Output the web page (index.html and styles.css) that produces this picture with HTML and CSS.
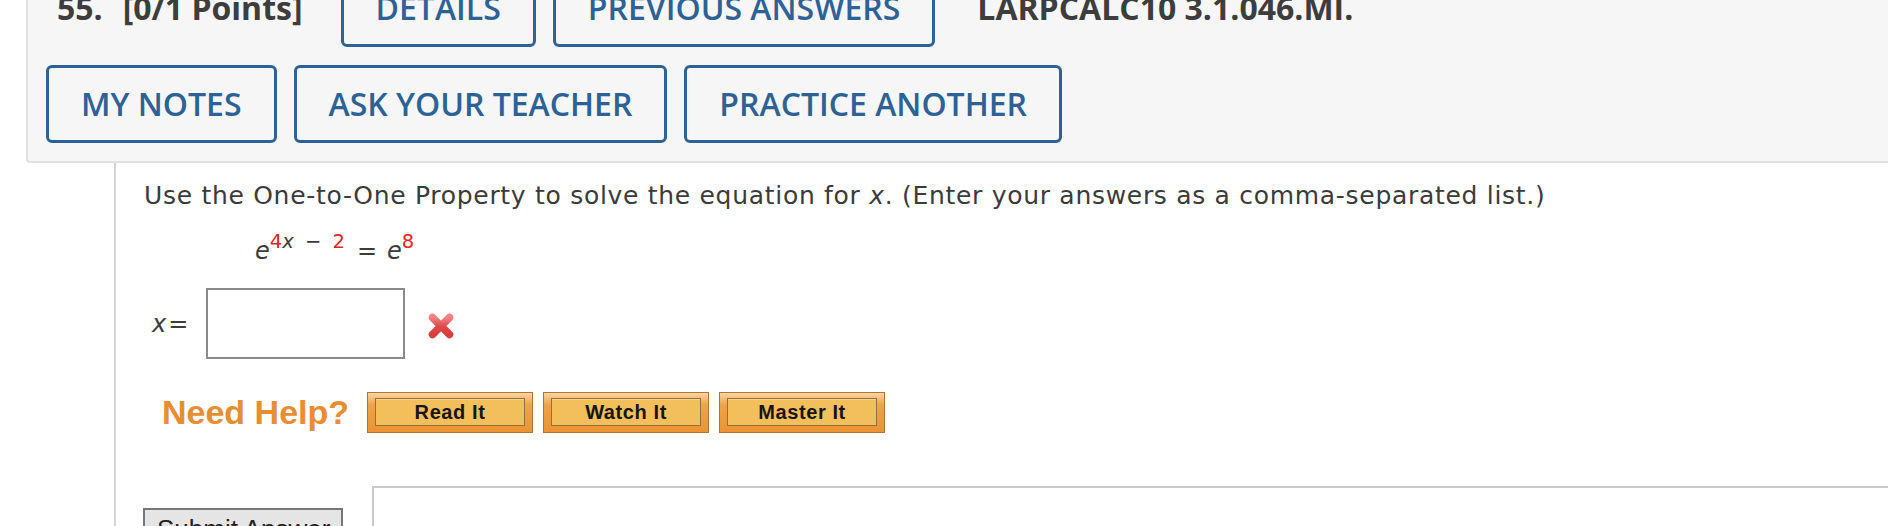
FILE: index.html
```html
<!DOCTYPE html>
<html lang="en">
<head>
  <meta charset="UTF-8">
  <meta name="viewport" content="width=device-width, initial-scale=1.0">
  <title>Question 55</title>
  <link rel="stylesheet" href="styles.css">
</head>
<body>
  <div class="question">
    <div class="question-head">
      <div class="head-row">
        <span class="q-number">55.</span>
        <span class="q-points">[0/1 Points]</span>
        <a class="head-btn" href="#">DETAILS</a>
        <a class="head-btn" href="#">PREVIOUS ANSWERS</a>
        <span class="q-ref">LARPCALC10 3.1.046.MI.</span>
      </div>
      <div class="head-row">
        <a class="head-btn" href="#">MY NOTES</a>
        <a class="head-btn" href="#">ASK YOUR TEACHER</a>
        <a class="head-btn" href="#">PRACTICE ANOTHER</a>
      </div>
    </div>

    <div class="question-body">
      <p class="prompt">Use the One-to-One Property to solve the equation for <i>x</i>. (Enter your answers as a comma-separated list.)</p>
      <div class="equation">
        <i>e</i><sup><span class="red">4</span><i>x</i> <span class="op">&minus;</span> <span class="red">2</span></sup><span class="eq">=</span><i>e</i><sup class="red">8</sup>
      </div>

      <div class="answer-row">
        <span class="answer-label"><i>x</i><span class="eq">=</span></span>
        <input class="answer-input" type="text">
        <svg class="wrong" width="28" height="28" viewBox="0 0 28 28">
          <defs>
            <linearGradient id="xg" x1="0" y1="0" x2="0" y2="1">
              <stop offset="0" stop-color="#f08282"/>
              <stop offset="0.5" stop-color="#e24a4a"/>
              <stop offset="1" stop-color="#d83e3e"/>
            </linearGradient>
          </defs>
          <path d="M5.5 5.5 L22.5 22.5 M22.5 5.5 L5.5 22.5" stroke="url(#xg)" stroke-width="7.5" stroke-linecap="round" fill="none"/>
        </svg>
      </div>

      <div class="help-row">
        <span class="need-help">Need Help?</span>
        <button class="help-btn"><span>Read It</span></button>
        <button class="help-btn"><span>Watch It</span></button>
        <button class="help-btn"><span>Master It</span></button>
      </div>

      <div class="submit-row">
        <button class="submit-btn">Submit Answer</button>
        <div class="feedback"></div>
      </div>
    </div>
  </div>
</body>
</html>
```

FILE: styles.css
```css
html, body {
  margin: 0;
  padding: 0;
  background: #fff;
  overflow: hidden;
}
body {
  font-family: "DejaVu Sans", Verdana, sans-serif;
  color: #3b3b3b;
}
.question {
  padding-left: 26px;
}

/* header panel */
.question-head {
  margin-top: -51px;
  margin-right: -30px;
  padding: 18px;
  background: #f6f6f6;
  border: 2px solid #e0e0e0;
  border-radius: 4px;
  display: flex;
  flex-direction: column;
  gap: 18px;
  font-family: "Open Sans", sans-serif;
}
.head-row {
  display: flex;
  align-items: baseline;
  gap: 17px;
}
.q-number, .q-points, .q-ref {
  font-size: 32px;
  font-weight: 700;
  color: #3d3d3d;
}
.q-number {
  margin-left: 11px;
}
.q-points {
  margin-left: 3px;
  margin-right: 21px;
}
.q-ref {
  margin-left: 25px;
}
.head-btn {
  display: block;
  padding: 14px 32px;
  border: 3px solid #2c6296;
  border-radius: 6px;
  font-size: 32px;
  font-weight: 600;
  line-height: 44px;
  color: #2c6296;
  text-decoration: none;
}

/* question body */
.question-body {
  margin-left: 88px;
  min-height: 420px;
  padding: 19px 0 0 28px;
  border-left: 2px solid #d3d3d3;
}
.prompt {
  margin: 0;
  font-size: 25px;
  letter-spacing: 0.7px;
  line-height: 28px;
  white-space: nowrap;
}
.equation {
  margin-top: 27px;
  padding-left: 111px;
  font-size: 24px;
  line-height: 28px;
}
.equation sup {
  font-size: 19.5px;
  line-height: 0;
  vertical-align: 11px;
}
.equation .op {
  margin: 0 5px;
}
.equation .eq {
  margin: 0 10px 0 12px;
}
.red {
  color: #e8231d;
}

.answer-row {
  display: flex;
  align-items: center;
  margin-top: 23px;
  padding-left: 8px;
}
.answer-label {
  font-size: 24px;
  line-height: 28px;
}
.answer-label .eq {
  margin-left: 2px;
}
.answer-input {
  box-sizing: border-box;
  width: 199px;
  height: 71px;
  margin: 0 0 0 18px;
  border: 2px solid #8a8a8a;
  border-radius: 0;
  padding: 0;
}
.wrong {
  margin: 4px 0 0 22px;
}

.help-row {
  display: flex;
  align-items: center;
  gap: 10px;
  margin-top: 33px;
  padding-left: 18px;
}
.need-help {
  margin-right: 8px;
  font-family: "Liberation Sans", Arial, sans-serif;
  font-size: 34px;
  font-weight: 700;
  color: #e78d32;
}
.help-btn {
  box-sizing: border-box;
  width: 166px;
  height: 41px;
  padding: 5px 7px 6px;
  border: 1px solid #b07434;
  background: linear-gradient(#f9d6a4, #f1a24a 30%, #ec9333);
  cursor: pointer;
}
.help-btn span {
  display: block;
  box-sizing: border-box;
  height: 100%;
  border: 1px solid #94703e;
  box-shadow: inset 0 1px 0 #f8d68c;
  background: #f3bf5b;
  font-family: "Liberation Sans", Arial, sans-serif;
  font-size: 20px;
  font-weight: 700;
  letter-spacing: 0.6px;
  line-height: 27px;
  color: #151515;
}

.submit-row {
  display: flex;
  align-items: flex-start;
  margin-top: 53px;
  margin-left: -1px;
}
.submit-btn {
  box-sizing: border-box;
  width: 200px;
  margin-top: 22px;
  padding: 4px 12px;
  border: 2px solid #777;
  border-radius: 0;
  background: #e5e5e5;
  font-family: "Liberation Sans", Arial, sans-serif;
  font-size: 26px;
  text-align: left;
  white-space: nowrap;
  color: #222;
}
.feedback {
  flex: 1;
  height: 200px;
  margin-left: 29px;
  margin-right: -10px;
  border: 2px solid #cacaca;
}
```
